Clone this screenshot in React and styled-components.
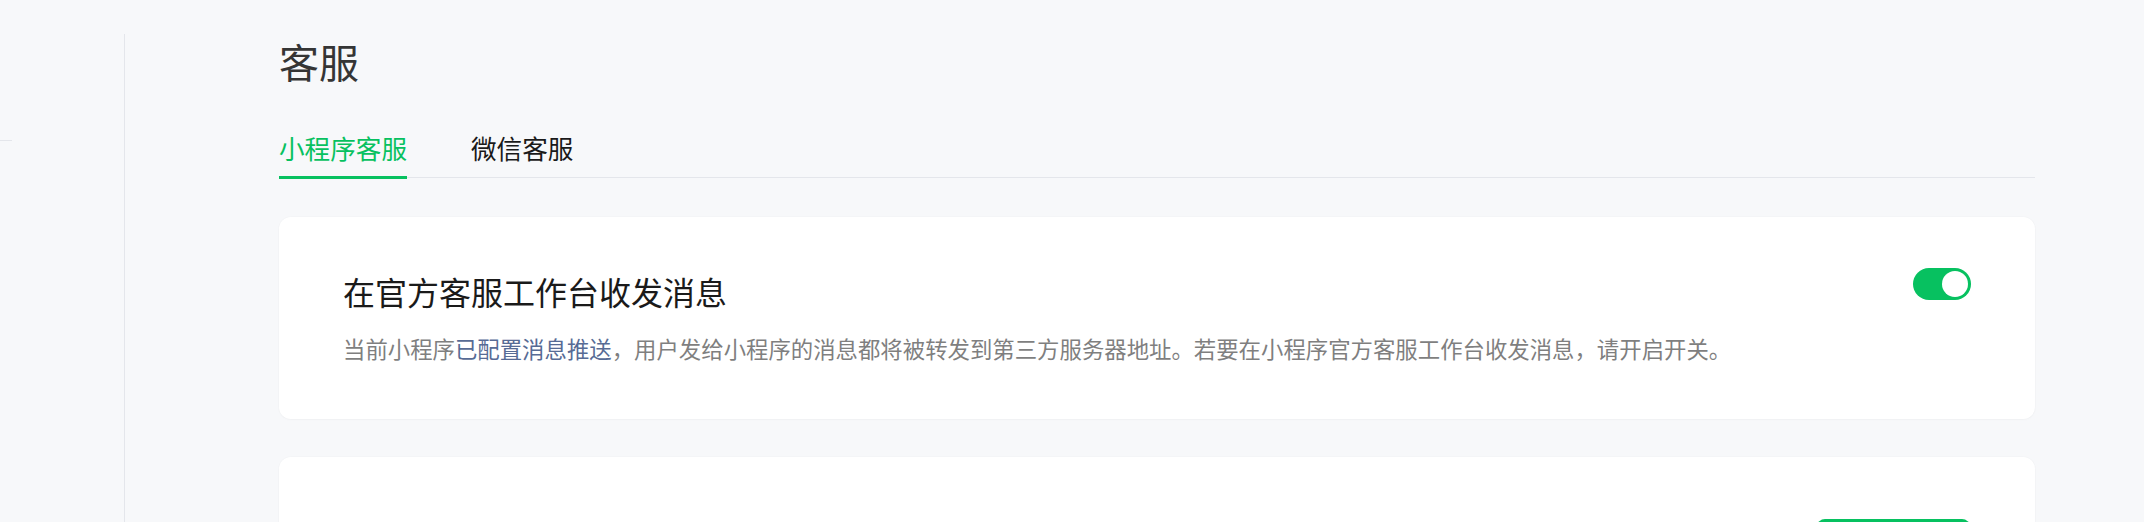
import React, { useState } from "react";
import styled, { createGlobalStyle } from "styled-components";

const GlobalStyle = createGlobalStyle`
  html, body {
    margin: 0;
    padding: 0;
    background: #f7f8fa;
  }
  body {
    font-family: "Noto Sans CJK SC", "Noto Sans", "Liberation Sans", sans-serif;
    -webkit-font-smoothing: antialiased;
  }
  * { box-sizing: border-box; }
`;

const Page = styled.div`
  display: flex;
  min-height: 100vh;
  background: #f7f8fa;
  overflow: hidden;
`;

const Sidebar = styled.aside`
  flex: 0 0 125px;
  margin-top: 34px;
  border-right: 1px solid #e4e6eb;
`;

const SideDivider = styled.div`
  width: 12px;
  height: 1px;
  margin-top: 106px;
  background: #e4e6eb;
`;

const Main = styled.main`
  flex: 1;
  min-width: 0;
  padding: 41px 109px 0 154px;
`;

const Heading = styled.h1`
  margin: 0;
  font-size: 40px;
  line-height: 40px;
  font-weight: 400;
  color: #353535;
`;

const TabBar = styled.nav`
  display: flex;
  gap: 64px;
  margin-top: 54px;
  border-bottom: 1px solid #e4e6eb;
`;

const Tab = styled.button`
  position: relative;
  padding: 0 0 16px;
  border: 0;
  background: none;
  font-family: inherit;
  font-size: 25.6px;
  line-height: 25.6px;
  font-weight: 400;
  cursor: pointer;
  color: ${(p) => (p.$active ? "#07c160" : "#1a1a1a")};

  &::after {
    content: "";
    position: absolute;
    left: 0;
    right: 0;
    bottom: -2px;
    height: 3px;
    background: ${(p) => (p.$active ? "#07c160" : "transparent")};
  }
`;

const Card = styled.section`
  margin-top: ${(p) => p.$gap}px;
  background: #ffffff;
  border-radius: 12px;
  box-shadow: 0 0 0 1px rgba(0, 0, 0, 0.012), 0 1px 3px rgba(0, 0, 0, 0.02);
  padding: ${(p) => p.$padding};
  min-height: ${(p) => p.$minHeight || 0}px;
`;

const CardHead = styled.div`
  display: flex;
  justify-content: space-between;
  align-items: flex-start;
`;

const CardTitle = styled.h2`
  margin: 0;
  font-size: 32px;
  line-height: 46px;
  font-weight: 400;
  color: #1a1a1a;
`;

const CardDesc = styled.p`
  margin: 16px 0 0;
  font-size: 22.4px;
  line-height: 36px;
  color: #7f7f7f;
`;

const Link = styled.a`
  color: #576b95;
  text-decoration: none;
  cursor: pointer;
`;

const Switch = styled.button`
  position: relative;
  flex: 0 0 auto;
  width: 58px;
  height: 32px;
  padding: 0;
  border: 0;
  border-radius: 16px;
  background: ${(p) => (p.$on ? "#07c160" : "#d9d9d9")};
  cursor: pointer;

  &::after {
    content: "";
    position: absolute;
    top: 3px;
    left: ${(p) => (p.$on ? "29px" : "3px")};
    width: 26px;
    height: 26px;
    border-radius: 50%;
    background: #ffffff;
    transition: left 0.2s;
  }
`;

const ActionRow = styled.div`
  display: flex;
  justify-content: flex-end;
`;

const PrimaryButton = styled.button`
  display: block;
  appearance: none;
  width: 153px;
  height: 56px;
  padding: 0;
  border: 0;
  outline: 0;
  border-radius: 8px;
  background-color: #07c160;
  cursor: pointer;
`;

export default function App() {
  const [tab, setTab] = useState(0);
  const [on, setOn] = useState(true);
  const tabs = ["小程序客服", "微信客服"];

  return (
    <>
      <GlobalStyle />
      <Page>
        <Sidebar>
          <SideDivider />
        </Sidebar>
        <Main>
          <Heading>客服</Heading>
          <TabBar>
            {tabs.map((t, i) => (
              <Tab key={t} $active={tab === i} onClick={() => setTab(i)}>
                {t}
              </Tab>
            ))}
          </TabBar>
          <Card $gap={39} $padding="51px 64px 53px">
            <CardHead>
              <CardTitle>在官方客服工作台收发消息</CardTitle>
              <Switch $on={on} onClick={() => setOn(!on)} aria-label="开关" />
            </CardHead>
            <CardDesc>
              当前小程序<Link>已配置消息推送</Link>，用户发给小程序的消息都将被转发到第三方服务器地址。若要在小程序官方客服工作台收发消息，请开启开关。
            </CardDesc>
          </Card>
          <Card $gap={38} $padding="62px 65px 64px 64px" $minHeight={200}>
            <ActionRow>
              <PrimaryButton aria-label="添加" />
            </ActionRow>
          </Card>
        </Main>
      </Page>
    </>
  );
}
